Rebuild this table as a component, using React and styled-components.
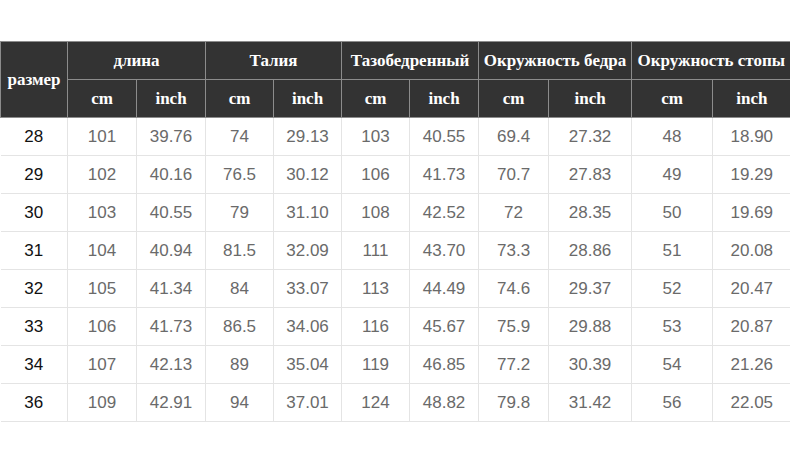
import React from 'react';
import styled, { createGlobalStyle } from 'styled-components';

const GlobalStyle = createGlobalStyle`
  html, body {
    margin: 0;
    padding: 0;
    background: #ffffff;
  }
`;

const Page = styled.div`
  width: 790px;
  height: 454px;
  padding-top: 41px;
  box-sizing: border-box;
  background: #fff;
  overflow: hidden;
`;

const Table = styled.table`
  width: 790px;
  border-collapse: collapse;
  table-layout: fixed;
`;

const HeadCell = styled.th`
  height: 37px;
  padding: 0;
  background: #333333;
  color: #ffffff;
  border: 1px solid #8c8c8c;
  font-family: "Liberation Serif", "Times New Roman", serif;
  font-weight: bold;
  font-size: 17px;
  text-align: center;
  white-space: nowrap;
  &:last-child {
    border-right: none;
  }
`;

const Cell = styled.td`
  height: 37px;
  padding: 0;
  border: 1px solid #e4e4e4;
  font-family: "Liberation Sans", Arial, sans-serif;
  font-size: 17px;
  color: ${(p) => (p.$size ? '#111111' : '#6a6a6a')};
  text-align: center;
  &:first-child {
    border-left: none;
  }
  &:last-child {
    border-right: none;
  }
`;

const widths = [67, 69, 69, 68, 68, 68, 69, 70, 83, 81, 78];

const groups = ['длина', 'Талия', 'Тазобедренный', 'Окружность бедра', 'Окружность стопы'];

const rows = [
  ['28', '101', '39.76', '74', '29.13', '103', '40.55', '69.4', '27.32', '48', '18.90'],
  ['29', '102', '40.16', '76.5', '30.12', '106', '41.73', '70.7', '27.83', '49', '19.29'],
  ['30', '103', '40.55', '79', '31.10', '108', '42.52', '72', '28.35', '50', '19.69'],
  ['31', '104', '40.94', '81.5', '32.09', '111', '43.70', '73.3', '28.86', '51', '20.08'],
  ['32', '105', '41.34', '84', '33.07', '113', '44.49', '74.6', '29.37', '52', '20.47'],
  ['33', '106', '41.73', '86.5', '34.06', '116', '45.67', '75.9', '29.88', '53', '20.87'],
  ['34', '107', '42.13', '89', '35.04', '119', '46.85', '77.2', '30.39', '54', '21.26'],
  ['36', '109', '42.91', '94', '37.01', '124', '48.82', '79.8', '31.42', '56', '22.05'],
];

const App = () => {
  return (
    <Page>
      <GlobalStyle />
      <Table>
        <colgroup>
          {widths.map((w, i) => (
            <col key={i} style={{ width: w }} />
          ))}
        </colgroup>
        <thead>
          <tr>
            <HeadCell rowSpan={2}>размер</HeadCell>
            {groups.map((g) => (
              <HeadCell key={g} colSpan={2}>{g}</HeadCell>
            ))}
          </tr>
          <tr>
            {groups.map((g) => (
              <React.Fragment key={g}>
                <HeadCell>cm</HeadCell>
                <HeadCell>inch</HeadCell>
              </React.Fragment>
            ))}
          </tr>
        </thead>
        <tbody>
          {rows.map((r) => (
            <tr key={r[0]}>
              {r.map((v, i) => (
                <Cell key={i} $size={i === 0}>{v}</Cell>
              ))}
            </tr>
          ))}
        </tbody>
      </Table>
    </Page>
  );
};

export default App;
